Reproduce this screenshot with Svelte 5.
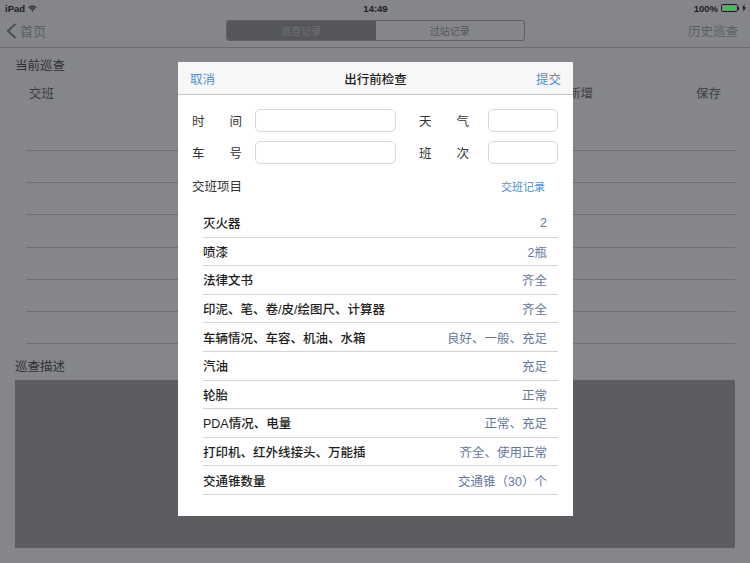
<script lang="ts">
  const bgLines = [0, 1, 2, 3, 4, 5, 6];

  const checks = [
    { name: '灭火器', value: '2' },
    { name: '喷漆', value: '2瓶' },
    { name: '法律文书', value: '齐全' },
    { name: '印泥、笔、卷/皮/绘图尺、计算器', value: '齐全' },
    { name: '车辆情况、车容、机油、水箱', value: '良好、一般、充足' },
    { name: '汽油', value: '充足' },
    { name: '轮胎', value: '正常' },
    { name: 'PDA情况、电量', value: '正常、充足' },
    { name: '打印机、红外线接头、万能插', value: '齐全、使用正常' },
    { name: '交通锥数量', value: '交通锥（30）个' }
  ];
</script>

<div class="page">
  <div class="status">
    <div class="status-left">
      <span>iPad</span>
      <svg width="9" height="7" viewBox="0 0 12 9" fill="none" stroke="#1c1c1e" stroke-width="1.4">
        <path d="M1 3.2a7 7 0 0 1 10 0" />
        <path d="M2.8 5a4.4 4.4 0 0 1 6.4 0" />
        <path d="M4.6 6.7a2 2 0 0 1 2.8 0" />
        <circle cx="6" cy="8" r=".7" fill="#1c1c1e" stroke="none" />
      </svg>
    </div>
    <span class="time">14:49</span>
    <div class="status-right">
      <span>100%</span>
      <span class="battery"><span class="battery-fill"></span></span>
      <span class="battery-tip"></span>
      <svg width="4" height="8" viewBox="0 0 4 8"><path d="M2.6 0 0 4.6h1.5L1.2 8 4 3.3H2.4z" fill="#1c1c1e" /></svg>
    </div>
  </div>

  <header class="nav">
    <div class="back">
      <svg width="11" height="16" viewBox="0 0 11 16" fill="none" stroke="#4b5157" stroke-width="2.2">
        <path d="M9.5 1 2 8l7.5 7" />
      </svg>
      <span>首页</span>
    </div>
    <div class="segments">
      <span class="seg active">巡查记录</span>
      <span class="seg">过站记录</span>
    </div>
    <span class="history">历史巡查</span>
  </header>

  <section class="current">
    <div class="section-title">当前巡查</div>
    <div class="columns">
      <span>交班</span>
      <div class="column-actions">
        <span>新增</span>
        <span>保存</span>
      </div>
    </div>
    <div class="lines">
      {#each bgLines as line (line)}
        <div class="line"></div>
      {/each}
    </div>
  </section>

  <section class="describe">
    <div class="section-title">巡查描述</div>
    <div class="describe-box"></div>
  </section>

  <div class="modal">
    <div class="modal-head">
      <span class="link">取消</span>
      <span class="modal-title">出行前检查</span>
      <span class="link">提交</span>
    </div>
    <div class="modal-body">
      <div class="form">
        <span class="label"><span>时</span><span>间</span></span>
        <span class="input"></span>
        <span class="label second"><span>天</span><span>气</span></span>
        <span class="input"></span>
        <span class="label"><span>车</span><span>号</span></span>
        <span class="input"></span>
        <span class="label second"><span>班</span><span>次</span></span>
        <span class="input"></span>
      </div>
      <div class="handover">
        <span>交班项目</span>
        <span class="link records">交班记录</span>
      </div>
      <div class="list">
        {#each checks as item (item.name)}
          <div class="row">
            <span class="row-name">{item.name}</span>
            <span class="row-value">{item.value}</span>
          </div>
        {/each}
      </div>
    </div>
  </div>
</div>

<style>
  :global(body) {
    margin: 0;
  }

  .page {
    position: relative;
    width: 750px;
    height: 563px;
    overflow: hidden;
    background: #85868a;
    color: #2e2f32;
    font-family: "Liberation Sans", "Noto Sans CJK SC", sans-serif;
    font-size: 12.5px;
  }

  .status {
    display: flex;
    justify-content: space-between;
    align-items: center;
    height: 16px;
    padding: 0 4px 0 5px;
    font-size: 9.5px;
    color: #1c1c1e;
  }

  .status-left,
  .status-right {
    display: flex;
    align-items: center;
    width: 120px;
    gap: 3px;
  }

  .status-right {
    justify-content: flex-end;
    gap: 0;
  }

  .time {
    font-weight: 700;
    font-size: 9.5px;
  }

  .status-left span,
  .status-right span:first-child {
    font-weight: 700;
  }

  .battery {
    display: block;
    box-sizing: border-box;
    width: 17px;
    height: 8px;
    margin-left: 3px;
    padding: 1px;
    border: 1px solid #1c1c1e;
    border-radius: 1.5px;
  }

  .battery-fill {
    display: block;
    height: 100%;
    background: #3fc25a;
  }

  .battery-tip {
    width: 1px;
    height: 3px;
    margin-right: 3px;
    background: #1c1c1e;
  }

  .nav {
    display: grid;
    grid-template-columns: 226px 299px 1fr;
    align-items: center;
    box-sizing: border-box;
    height: 32px;
    padding: 4px 0 6px;
    border-bottom: 1px solid #6b6c70;
  }

  .back {
    display: flex;
    align-items: center;
    gap: 3px;
    padding-left: 6px;
    color: #5b5e63;
    font-size: 13px;
  }

  .segments {
    display: flex;
    height: 21px;
    box-sizing: border-box;
    border: 1px solid #5f6064;
    border-radius: 3px;
    overflow: hidden;
    font-size: 10px;
  }

  .seg {
    flex: 1;
    display: flex;
    align-items: center;
    justify-content: center;
    color: #55565a;
  }

  .seg.active {
    background: #55565a;
    color: #6f7175;
  }

  .history {
    justify-self: end;
    padding-right: 12px;
    color: #5b5e63;
  }

  .section-title {
    font-size: 12.5px;
    line-height: 16px;
  }

  .current {
    padding: 10px 15px 0;
  }

  .columns {
    display: flex;
    justify-content: space-between;
    margin: 12px 14px 0 14px;
    line-height: 16px;
    color: #3c3d40;
  }

  .column-actions {
    display: flex;
    gap: 103px;
  }

  .lines {
    display: flex;
    flex-direction: column;
    gap: 31.2px;
    margin: 48px 0 0 11px;
  }

  .line {
    height: 1px;
    background: #6e6f73;
  }

  .describe {
    padding: 15px 15px 0;
  }

  .describe-box {
    height: 168px;
    margin-top: 5px;
    background: #5c5d60;
  }

  .modal {
    position: absolute;
    left: 178px;
    top: 62px;
    width: 395px;
    height: 454px;
    background: #fff;
    color: #1e1e20;
  }

  .modal-head {
    display: flex;
    justify-content: space-between;
    align-items: center;
    box-sizing: border-box;
    height: 33px;
    padding: 0 12px;
    background: #f7f7f7;
    border-bottom: 1px solid #c4c4c6;
  }

  .modal-title {
    font-weight: 500;
  }

  .link {
    color: #4a90d9;
  }

  .modal-body {
    padding: 14px 15px 0 14px;
  }

  .form {
    display: grid;
    grid-template-columns: 63px 141px 92px 70px;
    row-gap: 9px;
    align-items: center;
  }

  .label {
    display: flex;
    justify-content: space-between;
    width: 50px;
    color: #333;
  }

  .label.second {
    margin-left: 23px;
  }

  .input {
    box-sizing: border-box;
    height: 23px;
    background: #fff;
    border: 1px solid #d9d9db;
    border-radius: 5px;
  }

  .handover {
    display: flex;
    justify-content: space-between;
    margin-top: 15px;
    line-height: 16px;
    color: #333;
  }

  .records {
    font-size: 11px;
    padding-right: 13px;
  }

  .list {
    margin: 14px 0 0 11px;
    width: 355px;
  }

  .row {
    display: flex;
    justify-content: space-between;
    align-items: center;
    box-sizing: border-box;
    height: 28.6px;
    padding-right: 11px;
    border-bottom: 1px solid #d4d4d6;
  }

  .row-name {
    font-weight: 500;
  }

  .row-value {
    color: #64779e;
  }
</style>
